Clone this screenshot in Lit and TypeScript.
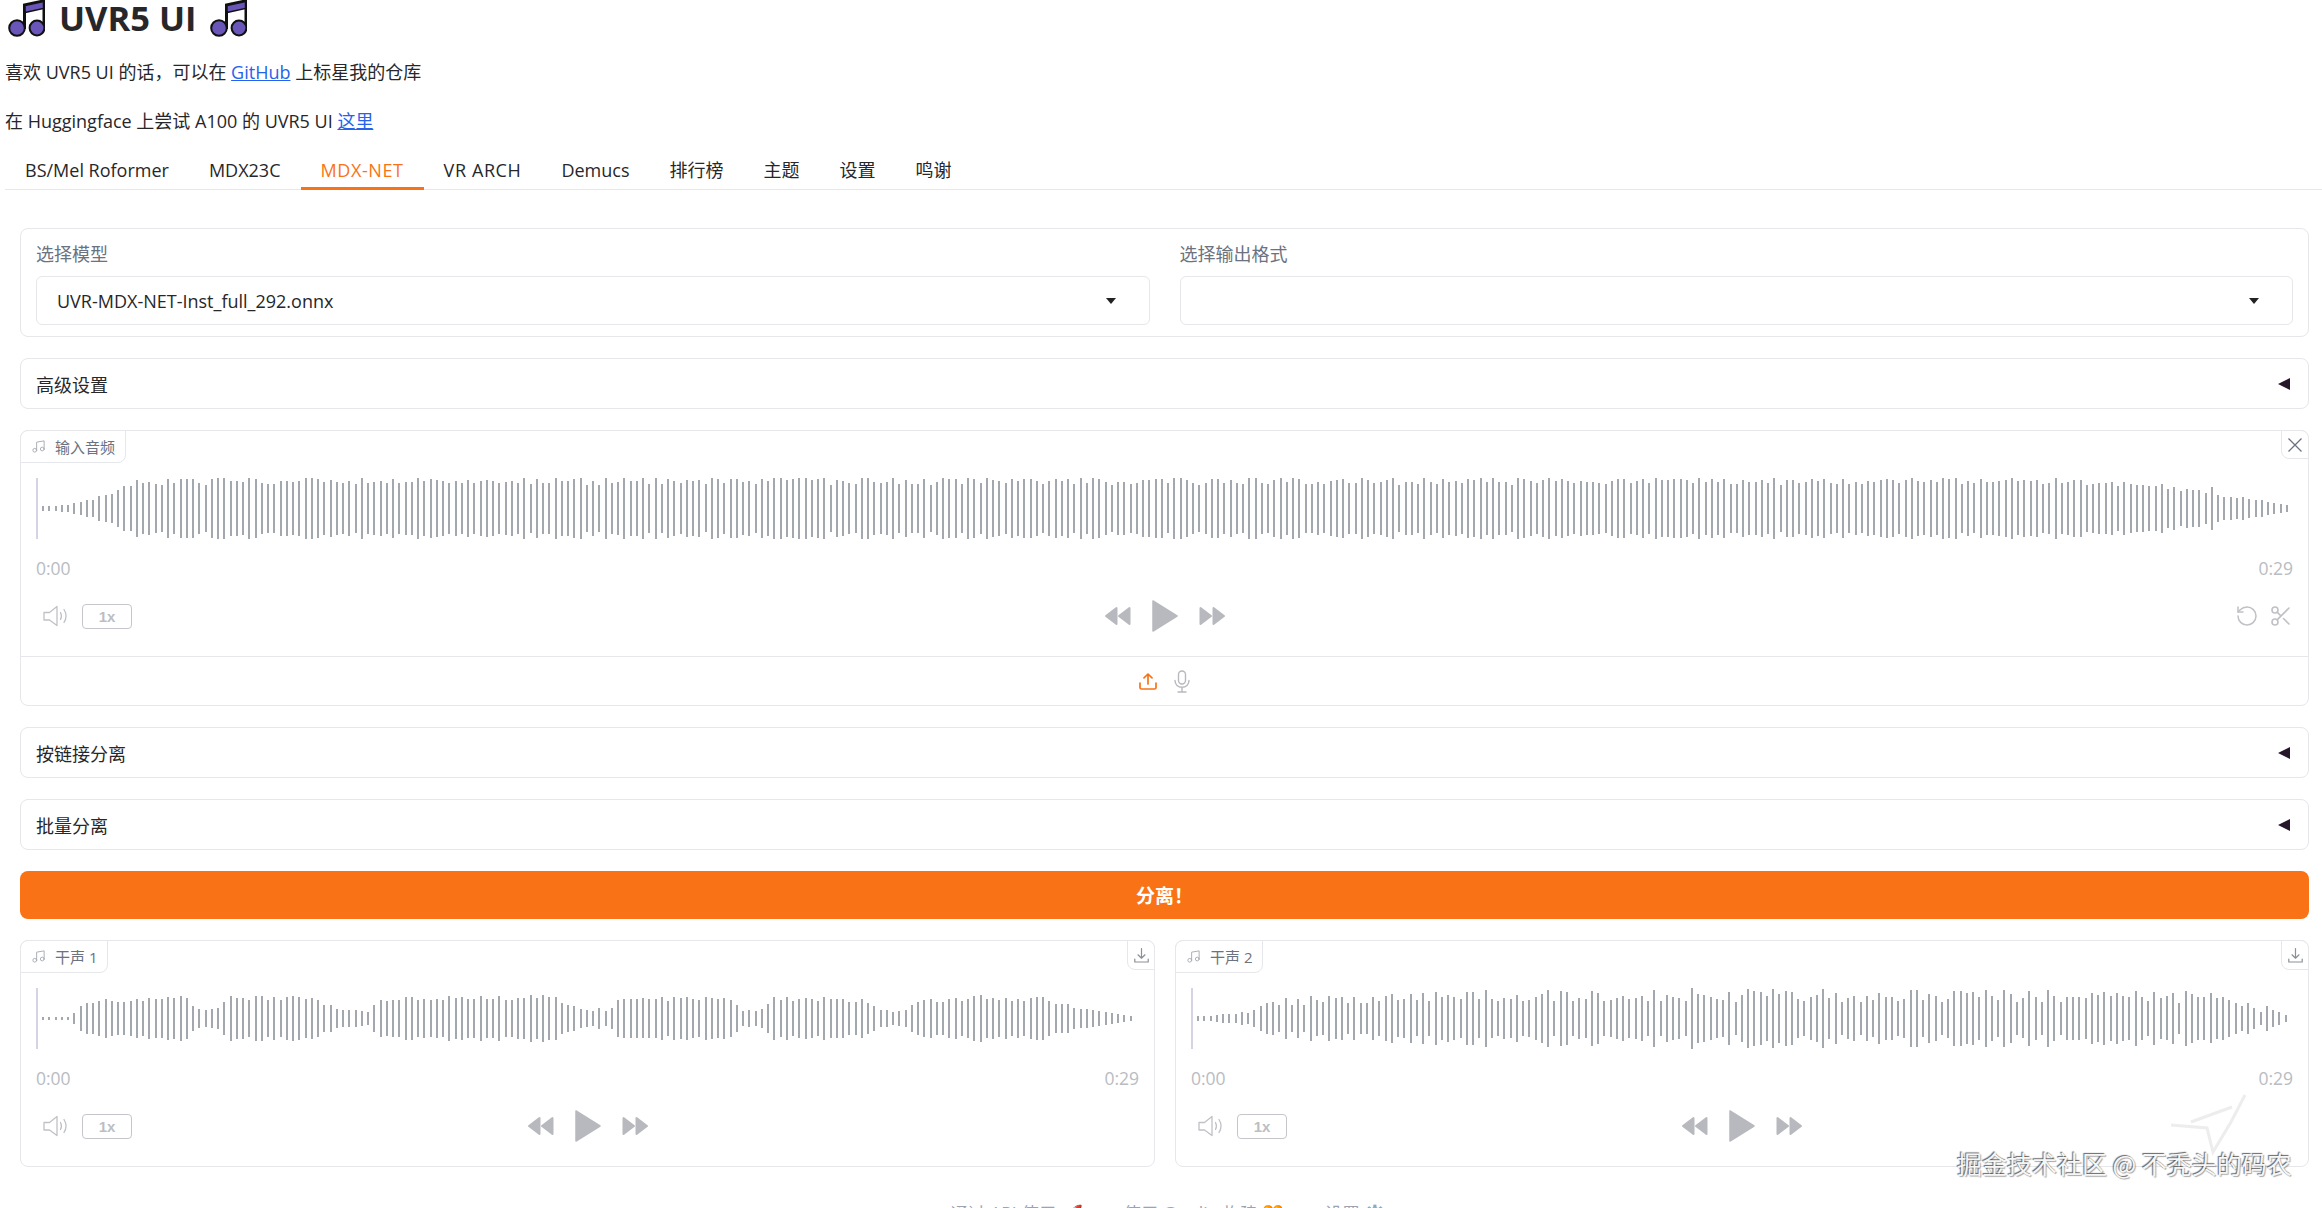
import { LitElement, html, css, svg } from "lit";
import { customElement, property } from "lit/decorators.js";

function rng(seed: number) {
  let s = seed;
  return () => {
    s = (s * 16807) % 2147483647;
    return (s - 1) / 2147483646;
  };
}

function interp(pts: number[][], x: number) {
  for (let i = 1; i < pts.length; i++) {
    if (x <= pts[i][0]) {
      const [a, b] = pts[i - 1];
      const [c, d] = pts[i];
      return b + ((d - b) * (x - a)) / (c - a || 1);
    }
  }
  return pts[pts.length - 1][1];
}

const ENV: Record<string, number[][]> = {
  input: [[0, 1], [0.012, 3], [0.02, 8], [0.035, 18], [0.045, 26], [0.06, 28], [0.9, 28], [0.94, 24], [0.97, 14], [1, 3]],
  v1: [[0, 1], [0.025, 1], [0.03, 6], [0.04, 17], [0.135, 22], [0.14, 8], [0.16, 8], [0.17, 22], [0.25, 20], [0.27, 9], [0.3, 7], [0.31, 19], [0.47, 21], [0.49, 9], [0.52, 7], [0.53, 18], [0.635, 21], [0.64, 8], [0.66, 8], [0.67, 20], [0.755, 18], [0.77, 7], [0.79, 7], [0.805, 18], [0.92, 20], [0.95, 10], [1, 2]],
  v2: [[0, 1], [0.02, 4], [0.05, 7], [0.06, 18], [0.2, 25], [0.5, 27], [0.9, 26], [0.95, 19], [0.98, 9], [1, 4]],
};

@customElement("wave-form")
class WaveForm extends LitElement {
  static styles = css`
    :host { display: block; height: 61px; }
    svg { display: block; width: 100%; height: 61px; }
    .bar { stroke: #a3a7ae; stroke-width: 2; stroke-linecap: round; shape-rendering: crispEdges; }
    .head { stroke: #d4d4e4; stroke-width: 2; }
  `;
  @property({ type: String }) kind = "input";
  @property({ type: Number }) w = 2257;
  @property({ type: Number }) seed = 7;
  render() {
    const env = ENV[this.kind];
    const r = rng(this.seed);
    const step = 6.25;
    const start = 7;
    const end = this.w - 6;
    const n = Math.floor((end - start) / step);
    const spread = this.kind === "v2" ? 0.5 : 0.26;
    const bars = [];
    for (let i = 0; i <= n; i++) {
      const x = Math.round(start + i * step);
      const e = interp(env, i / n);
      const spike = r() < 0.03 ? 1.3 : 1;
      const h = Math.max(0.8, Math.min(30.5, e * spike * (1.08 - spread + r() * spread)));
      bars.push(svg`<line class="bar" x1=${x} x2=${x} y1=${30.5 - h} y2=${30.5 + h}></line>`);
    }
    return html`<svg viewBox="0 0 ${this.w} 61" preserveAspectRatio="none">
      <line class="head" x1="1" x2="1" y1="0" y2="61"></line>${bars}
    </svg>`;
  }
}

const noteSmall = html`<svg class="ni" viewBox="0 0 24 24" fill="none" stroke="currentColor" stroke-width="1.5" stroke-linecap="round" stroke-linejoin="round"><path d="M9 18V5l12-2v13"></path><circle cx="6" cy="18" r="3"></circle><circle cx="18" cy="16" r="3"></circle></svg>`;

@customElement("audio-player")
class AudioPlayer extends LitElement {
  static styles = css`
    :host { display: block; font-family: "Open Sans", "Noto Sans CJK SC", sans-serif; }
    .card { position: relative; border: 1px solid #e5e7eb; border-radius: 8px; background: #fff; padding-top: 47px; }
    .label { position: absolute; left: -1px; top: -1px; display: flex; align-items: center; gap: 9px; height: 33px; padding: 0 10px; box-sizing: border-box;
      border: 1px solid #e5e7eb; border-radius: 8px 0 8px 0; font-size: 15px; color: #6b7280; background: #fff; }
    .ni { width: 15px; height: 15px; color: #a8abb2; }
    .corner { position: absolute; right: -1px; top: -1px; width: 28px; display: flex; align-items: center; justify-content: center; box-sizing: border-box;
      border: 1px solid #e5e7eb; border-radius: 0 8px 0 8px; background: #fff; color: #6b7280; }
    .corner svg { display: block; }
    .x { height: 29px; }
    .dl { height: 30px; }
    .body { padding: 0 15px; }
    .times { display: flex; justify-content: space-between; height: 24px; margin-top: 17px; line-height: 24px; font-size: 17.5px; color: #b9bcc2; }
    .ctrl { display: grid; grid-template-columns: 1fr auto 1fr; align-items: center; height: 32px; margin-top: 20px; }
    .left { display: flex; align-items: center; gap: 13px; padding-left: 7px; }
    .left svg { display: block; }
    .rate { width: 50px; height: 25px; box-sizing: border-box; border: 1px solid #c4c6cb; border-radius: 4px; text-align: center; line-height: 23px; font-size: 15px; font-weight: 700; color: #bcbec3; font-family: "Liberation Sans", sans-serif; }
    .mid { display: flex; align-items: center; gap: 21px; }
    .mid svg { display: block; }
    .right { display: flex; justify-content: flex-end; align-items: center; gap: 10px; }
    .right svg { display: block; }
    .src { display: flex; align-items: center; justify-content: center; gap: 17px; height: 48px; border-top: 1px solid #e5e7eb; margin-top: 24px; }
    .src svg { display: block; }
    .spacer { height: 24px; }
  `;
  @property({ type: String }) label = "";
  @property({ type: String }) kind = "input";
  @property({ type: Number }) w = 2257;
  @property({ type: Number }) seed = 7;
  @property({ type: Boolean }) editable = false;
  render() {
    return html`<div class="card">
      <div class="label">${noteSmall}<span>${this.label}</span></div>
      ${this.editable
        ? html`<div class="corner x"><svg width="18" height="18" viewBox="0 0 18 18" stroke="currentColor" stroke-width="1.3" fill="none"><path d="M2.5 2.5l13 13M15.5 2.5l-13 13"></path></svg></div>`
        : html`<div class="corner dl"><svg width="17" height="17" viewBox="0 0 17 17" stroke="#8b8f96" stroke-width="1.2" fill="none" stroke-linecap="round" stroke-linejoin="round"><path d="M8.5 1.5v9.5M5 7.8l3.5 3.4 3.5-3.4M1.8 12v3h13.4v-3"></path></svg></div>`}
      <div class="body">
        <wave-form .kind=${this.kind} .w=${this.w} .seed=${this.seed}></wave-form>
        <div class="times"><span>0:00</span><span>0:29</span></div>
        <div class="ctrl">
          <div class="left">
            <svg width="26" height="22" viewBox="0 0 26 22" fill="none" stroke="#bfc1c6" stroke-width="1.3" stroke-linejoin="round" stroke-linecap="round"><path d="M1 7.5h5.5L14 1.5v19l-7.5-5.5H1z"></path><path d="M17.5 7.5c1.2 2.2 1.2 4.8 0 7M21 4.5c2.5 4 2.5 9 0 13"></path></svg>
            <div class="rate">1x</div>
          </div>
          <div class="mid">
            <svg width="27" height="20" viewBox="0 0 27 20" fill="#b8b9be" stroke="#b8b9be" stroke-width="2" stroke-linejoin="round"><path d="M12.5 2v16L2 10z"></path><path d="M25.5 2v16L15 10z"></path></svg>
            <svg width="26" height="32" viewBox="0 0 26 32" fill="#b8b9be" stroke="#b8b9be" stroke-width="1.5" stroke-linejoin="round"><path d="M1 1v30l24-15z"></path></svg>
            <svg width="27" height="20" viewBox="0 0 27 20" fill="#b8b9be" stroke="#b8b9be" stroke-width="2" stroke-linejoin="round"><path d="M1.5 2v16L12 10z"></path><path d="M14.5 2v16L25 10z"></path></svg>
          </div>
          ${this.editable
            ? html`<div class="right">
                <svg width="24" height="24" viewBox="0 0 24 24" fill="none" stroke="#bfc1c6" stroke-width="1.5" stroke-linecap="round" stroke-linejoin="round"><path d="M3 12a9 9 0 1 0 9-9 9.75 9.75 0 0 0-6.74 2.74L3 8"></path><path d="M3 3v5h5"></path></svg>
                <svg width="24" height="24" viewBox="0 0 24 24" fill="none" stroke="#bfc1c6" stroke-width="1.6" stroke-linecap="round" stroke-linejoin="round"><circle cx="6" cy="6" r="3"></circle><circle cx="6" cy="18" r="3"></circle><path d="M20 4L8.12 15.88M14.47 14.48L20 20M8.12 8.12L12 12"></path></svg>
              </div>`
            : html`<div></div>`}
        </div>
        ${this.editable ? "" : html`<div class="spacer"></div>`}
      </div>
      ${this.editable
        ? html`<div class="src">
            <svg width="18" height="18" viewBox="0 0 18 18" fill="none" stroke="#f97316" stroke-width="1.7" stroke-linecap="round" stroke-linejoin="round"><path d="M9 12V2M5 5.8L9 2l4 3.8M1 11v4.5a1.5 1.5 0 0 0 1.5 1.5h13a1.5 1.5 0 0 0 1.5-1.5V11"></path></svg>
            <svg width="16" height="23" viewBox="0 0 16 23" fill="none" stroke="#b8b9be" stroke-width="1.4" stroke-linecap="round"><rect x="4.5" y="1" width="7" height="13" rx="3.5"></rect><path d="M1 10.5c0 4 3 6.8 7 6.8s7-2.8 7-6.8M8 17.3V22M4 22h8"></path></svg>
          </div>`
        : ""}
    </div>`;
  }
}

const bigNote = html`<svg class="note" viewBox="0 0 37 37"><path d="M16.5 29V5L36 .8V29" fill="none" stroke="#111" stroke-width="3"></path><path d="M17 5.5L35.5 1.5v7L17 12.5z" fill="#6a55b8" stroke="#111" stroke-width="1.5"></path><circle cx="9" cy="28" r="7.8" fill="#6a55b8" stroke="#111" stroke-width="2"></circle><circle cx="29" cy="28" r="7.4" fill="#6a55b8" stroke="#111" stroke-width="2"></circle></svg>`;

@customElement("app-root")
class AppRoot extends LitElement {
  static styles = css`
    :host { display: block; height: 1208px; overflow: hidden; position: relative; background: #fff; color: #27272a;
      font-family: "Open Sans", "Noto Sans CJK SC", sans-serif; font-size: 18px; }
    .page { padding-left: 5px; }
    h1 { display: flex; align-items: center; margin: 0; height: 36px; padding-left: 3px; gap: 14px; font-size: 34.5px; font-weight: 700; color: #27272a; font-family: "Open Sans", sans-serif; line-height: 36px; }
    .note { width: 37px; height: 37px; display: block; flex: none; }
    p { margin: 0; height: 49px; line-height: 49px; }
    p.first { margin-top: 12px; }
    a { color: #2563eb; text-decoration: underline; }
    .tabs { display: flex; height: 43px; border-bottom: 1px solid #e5e7eb; }
    .tab { padding: 5px 20px 0; line-height: 38px; height: 44px; box-sizing: border-box; white-space: nowrap; }
    .tab.on { color: #f97316; border-bottom: 3px solid #f97316; }
    .tab.wide { letter-spacing: 0.6px; }
    .panel { display: flex; flex-direction: column; gap: 21px; padding: 38px 13px 0 15px; }
    .box { border: 1px solid #e5e7eb; border-radius: 8px; background: #fff; box-sizing: border-box; }
    .selects { height: 109px; padding: 11px 15px 0; display: grid; grid-template-columns: 1fr 1fr; column-gap: 30px; }
    .lbl { color: #6b7280; line-height: 28px; height: 36px; }
    .input { height: 49px; box-sizing: border-box; border: 1px solid #e5e7eb; border-radius: 6px; display: flex; align-items: center; justify-content: space-between; padding: 0 33px 0 20px; }
    .caret { width: 0; height: 0; border-left: 5.5px solid transparent; border-right: 5.5px solid transparent; border-top: 6px solid #222; }
    .acc { height: 51px; display: flex; align-items: center; justify-content: space-between; padding: 0 18px 0 15px; }
    .tri { width: 0; height: 0; border-top: 6px solid transparent; border-bottom: 6px solid transparent; border-right: 12px solid #27172a; }
    .go { height: 48px; border-radius: 8px; background: #f97316; color: #fff; font-weight: 700; font-size: 19px; display: flex; align-items: center; justify-content: center; }
    .outs { display: grid; grid-template-columns: 1135px 1134px; column-gap: 20px; }
    .footer { display: flex; align-items: center; justify-content: center; gap: 18px; margin-top: 34px; padding-left: 10px; color: #9ca3af; font-size: 17.5px; line-height: 24px; }
    .mark { position: absolute; left: 1957px; top: 1146px; font-size: 25px; line-height: 34px; color: #f6f6f6; white-space: nowrap; font-family: "Noto Sans CJK SC", sans-serif;
      text-shadow: -1px -1px 1px rgba(0,0,0,.6), 1px 1px 1px rgba(0,0,0,.35); }
    .logo { position: absolute; left: 2165px; top: 1092px; }
  `;
  render() {
    const tabs = ["BS/Mel Roformer", "MDX23C", "MDX-NET", "VR ARCH", "Demucs", "排行榜", "主题", "设置", "鸣谢"];
    const wide = ["MDX-NET", "VR ARCH"];
    return html`<div class="page">
        <h1>${bigNote}<span>UVR5 UI</span>${bigNote}</h1>
        <p class="first">喜欢 UVR5 UI 的话，可以在 <a>GitHub</a> 上标星我的仓库</p>
        <p>在 Huggingface 上尝试 A100 的 UVR5 UI <a>这里</a></p>
        <div class="tabs">${tabs.map((t) => html`<div class="tab ${t === "MDX-NET" ? "on" : ""} ${wide.includes(t) ? "wide" : ""}">${t}</div>`)}</div>
        <div class="panel">
          <div class="box selects">
            <div><div class="lbl">选择模型</div><div class="input"><span>UVR-MDX-NET-Inst_full_292.onnx</span><i class="caret"></i></div></div>
            <div><div class="lbl">选择输出格式</div><div class="input"><span></span><i class="caret"></i></div></div>
          </div>
          <div class="box acc"><span>高级设置</span><i class="tri"></i></div>
          <audio-player label="输入音频" kind="input" .w=${2257} .seed=${11} editable></audio-player>
          <div class="box acc"><span>按链接分离</span><i class="tri"></i></div>
          <div class="box acc"><span>批量分离</span><i class="tri"></i></div>
          <div class="go">分离！</div>
          <div class="outs">
            <audio-player label="干声 1" kind="v1" .w=${1103} .seed=${23}></audio-player>
            <audio-player label="干声 2" kind="v2" .w=${1102} .seed=${37}></audio-player>
          </div>
        </div>
        <div class="footer"><span>通过 API 使用 🚀</span><span>·</span><span>使用 Gradio 构建 🧡</span><span>·</span><span>设置 ⚙️</span></div>
      </div>
      <svg class="logo" width="90" height="70" viewBox="0 0 90 70" fill="none" stroke="#ededed" stroke-width="3"><path d="M80 3L66 30 48 60 42 36 6 33M26 30L67 15"></path></svg>
      <div class="mark">掘金技术社区 @ 不秃头的码农</div>`;
  }
}
